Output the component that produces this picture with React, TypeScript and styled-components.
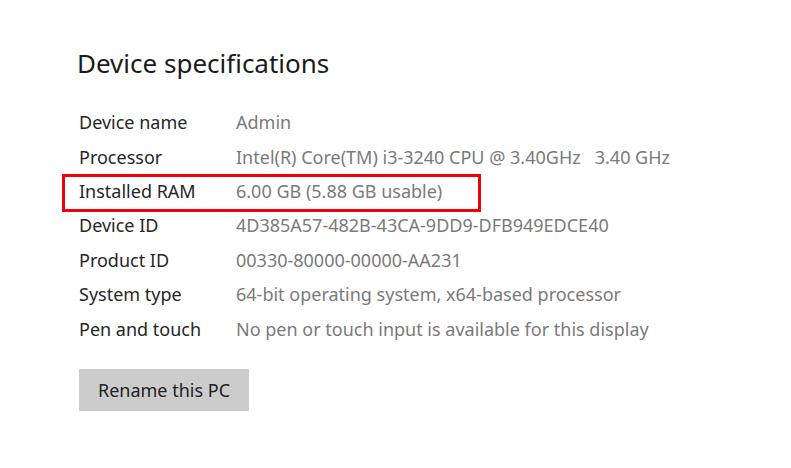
import styled, { createGlobalStyle } from "styled-components";

const GlobalStyle = createGlobalStyle`
  html, body {
    margin: 0;
    padding: 0;
    background: #ffffff;
  }
  body {
    font-family: "Noto Sans", "Open Sans", "Liberation Sans", sans-serif;
    -webkit-font-smoothing: antialiased;
  }
`;

const specs = [
  { label: "Device name", value: "Admin" },
  { label: "Processor", value: "Intel(R) Core(TM) i3-3240 CPU @ 3.40GHz\u00a0\u00a0\u00a03.40 GHz" },
  { label: "Installed RAM", value: "6.00 GB (5.88 GB usable)", marked: true },
  { label: "Device ID", value: "4D385A57-482B-43CA-9DD9-DFB949EDCE40" },
  { label: "Product ID", value: "00330-80000-00000-AA231" },
  { label: "System type", value: "64-bit operating system, x64-based processor" },
  { label: "Pen and touch", value: "No pen or touch input is available for this display" },
];

export default function App() {
  return (
    <>
      <GlobalStyle />
      <Page>
        <Title>Device specifications</Title>

        {/* 사양 목록 */}
        <SpecList>
          {specs.map((s) => (
            <SpecRow key={s.label} marked={s.marked}>
              <Label>{s.label}</Label>
              <Value>{s.value}</Value>
            </SpecRow>
          ))}
        </SpecList>

        <RenameButton>Rename this PC</RenameButton>
      </Page>
    </>
  );
}

const Page = styled.div`
  width: 791px;
  height: 468px;
  box-sizing: border-box;
  padding: 45px 0 0 79px;
  display: flex;
  flex-direction: column;
  align-items: flex-start;
`;

const Title = styled.h1`
  margin: 0 0 0 -2px;
  font-size: 26px;
  font-weight: 400;
  line-height: 36px;
  color: #1b1b1b;
  letter-spacing: 0;
`;

const SpecList = styled.div`
  margin-top: 24px;
  display: flex;
  flex-direction: column;
`;

const SpecRow = styled.div<{ marked?: boolean }>`
  position: relative;
  display: grid;
  grid-template-columns: 157px auto;
  height: 34.4px;
  align-items: center;

  ${(p) =>
    p.marked &&
    `
    &::after {
      content: "";
      position: absolute;
      left: -17px;
      top: 0px;
      width: 419px;
      height: 38px;
      box-sizing: border-box;
      border: 3px solid #f0000a;
    }
  `}
`;

const Label = styled.span`
  font-size: 18px;
  color: #262626;
  white-space: nowrap;
`;

const Value = styled.span`
  font-size: 18px;
  color: #7a7a7a;
  white-space: nowrap;
`;

const RenameButton = styled.button`
  margin-top: 23px;
  width: 170px;
  height: 42px;
  border: none;
  background: #cccccc;
  font-family: inherit;
  font-size: 18px;
  color: #222222;
  cursor: pointer;
`;
